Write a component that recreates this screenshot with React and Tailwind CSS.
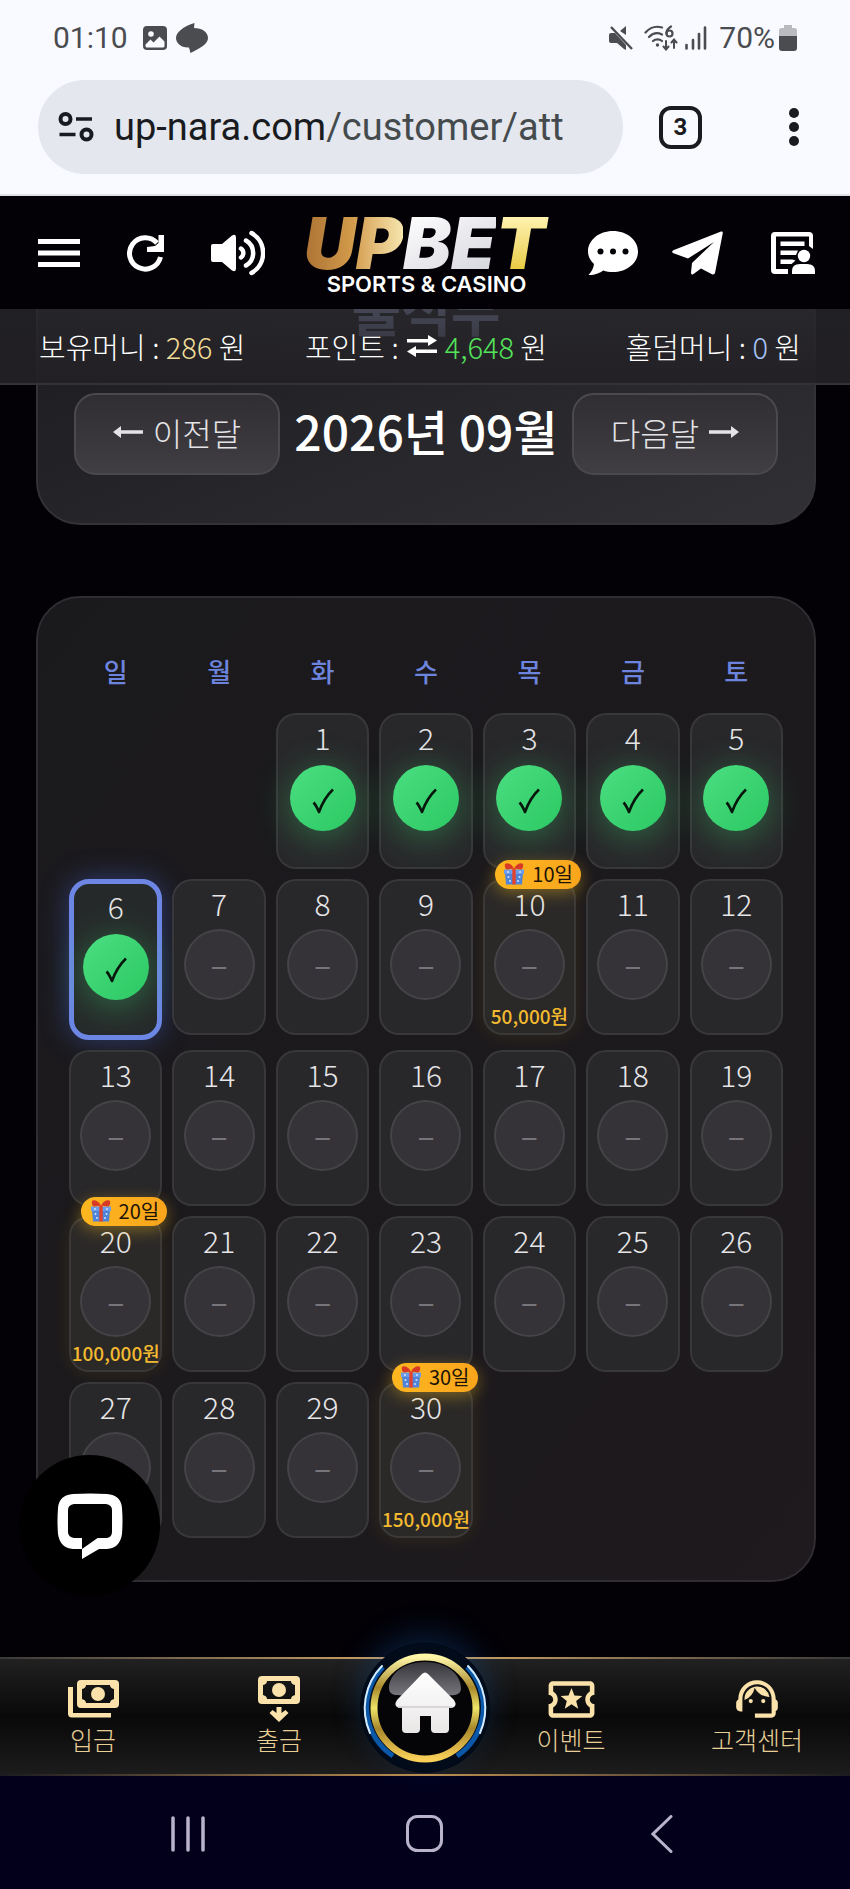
// App.jsx
import { MdSupportAgent, MdOutlineLocalActivity } from "react-icons/md";

const WEEKDAYS = ["일", "월", "화", "수", "목", "금", "토"];
const FIRST_WEEKDAY = 2;
const DAYS_IN_MONTH = 30;
const TODAY = 6;
const REWARDS = { 10: "50,000원", 20: "100,000원", 30: "150,000원" };

function StatusBar() {
  return (
    <div className="flex items-center justify-between px-[53px] pt-5 h-[56px] text-[30px] leading-9 text-[#4b4c50]">
      <div className="flex items-center">
        <span>01:10</span>
        <svg className="ml-[15px] w-6 h-6" viewBox="0 0 24 24">
          <rect width="24" height="24" rx="4" fill="currentColor" />
          <circle cx="8" cy="8" r="2.8" fill="#f8faff" />
          <path d="M2.500 18.500l5-5 3 3 6-6 5 5V20a1.500 1.500 0 0 1-1.500 1.500H4A1.500 1.500 0 0 1 2.500 20z" fill="#f8faff" />
        </svg>
        <svg className="ml-[9px] w-8 h-[30px]" viewBox="0 0 32 30">
          <path
            d="M18.500 0L18 5C26 5 32 9 32 15C32 21 24 25.500 14.500 30L13 24.500C5 25 0 20 0 15C0 9 8 3 18.500 0z"
            fill="currentColor"
          />
        </svg>
      </div>
      <div className="flex items-center">
        <svg className="w-6 h-6" viewBox="0 0 24 24" fill="currentColor">
          <path d="M0 9a2 2 0 0 1 2-2h4l11 12v5l-2-1-7-6H2a2 2 0 0 1-2-2zM11 5l6-5v9z" />
          <path d="M2 1l21 22" stroke="currentColor" strokeWidth="2.400" />
        </svg>
        <svg className="ml-[11px] w-[34px] h-[26px]" viewBox="0 0 34 26" fill="none" stroke="currentColor" strokeWidth="2.200" strokeLinecap="round">
          <path d="M1.500 7.500C6.500 2 13 1 18 2.500M5 12C9 8 14 7.500 18 9.500M9 16C11.500 13.800 15.500 13.800 18 16" />
          <circle cx="13.500" cy="20" r="1.700" fill="currentColor" stroke="none" />
          <path d="M27 1.500C23 4 22.300 6.500 22.500 8.500" />
          <circle cx="25.500" cy="8.500" r="3" />
          <path d="M22 16v8M19.500 21.500l2.500 3 2.500-3M30 23v-8M27.500 17.500l2.500-3 2.500 3" strokeWidth="2" />
        </svg>
        <svg className="ml-[7px] w-[22px] h-6" viewBox="0 0 22 24" stroke="currentColor" strokeWidth="2.600" strokeLinecap="round">
          <path d="M1.500 19v3.500M8 14v8.500M14 8v14.500M20 1.500v21" />
        </svg>
        <span className="ml-3">70%</span>
        <svg className="ml-1 w-[18px] h-[26px]" viewBox="0 0 18 26">
          <path d="M5 0h8v3h2.500A2.500 2.500 0 0 1 18 5.500V12H0V5.500A2.500 2.500 0 0 1 2.500 3H5z" fill="#b9bbbf" />
          <path d="M0 11h18v12a3 3 0 0 1-3 3H3a3 3 0 0 1-3-3z" fill="currentColor" />
        </svg>
      </div>
    </div>
  );
}

function AddressBar() {
  return (
    <div className="flex items-center pl-[38px] pr-11 pt-6 pb-5">
      <div className="flex items-center flex-1 min-w-0 h-[94px] pl-5 rounded-full bg-[#e4e7ee]">
        <svg className="w-9 h-[30px] shrink-0" viewBox="0 0 36 30" fill="none" stroke="#191b20" strokeWidth="4">
          <circle cx="7.500" cy="7" r="5" />
          <circle cx="28.500" cy="22.500" r="5" />
          <path d="M18 7h16M1.500 22.500h16" strokeWidth="3.600" />
        </svg>
        <a href="#address" className="ml-5 text-[38px] leading-[48px] text-[#191b20] whitespace-nowrap">
          up-nara.com<span className="text-[#454b4d]">/customer/att</span>
        </a>
      </div>
      <button
        aria-label="열린 탭"
        className="ml-9 w-[43px] h-[43px] rounded-xl border-4 border-[#191b20] text-2xl leading-none font-bold text-[#191b20]"
      >
        3
      </button>
      <button aria-label="메뉴 더보기" className="ml-20 w-6 h-[38px] flex flex-col items-center justify-between">
        <span className="w-[10px] h-[10px] rounded-full bg-[#191b20]" />
        <span className="w-[10px] h-[10px] rounded-full bg-[#191b20]" />
        <span className="w-[10px] h-[10px] rounded-full bg-[#191b20]" />
      </button>
    </div>
  );
}

function SiteHeader() {
  return (
    <header className="relative z-20 bg-[#030106]">
      <div className="flex items-center justify-between h-[113px] pl-[38px] pr-[35px] text-white">
        <div className="flex items-center gap-[47px]">
          <button aria-label="메뉴">
            <svg className="w-[42px] h-7" viewBox="0 0 42 28" fill="currentColor">
              <path d="M0 0h42v5H0zM0 11.500h42v5H0zM0 23h42v5H0z" />
            </svg>
          </button>
          <button aria-label="새로고침">
            <svg className="w-[37px] h-[38px]" viewBox="0 0 37 38">
              <path d="M33.500 23A15.700 15.700 0 1 1 30 9" fill="none" stroke="currentColor" strokeWidth="5" />
              <path d="M31.500 1H37v17H20v-5l8-1 3.500-3z" fill="currentColor" />
            </svg>
          </button>
          <button aria-label="소리">
            <svg className="w-[54px] h-[46px]" viewBox="0 0 54 46" fill="none" stroke="currentColor" strokeWidth="4.500" strokeLinecap="round">
              <path d="M2 14h9L21 5.500q4-2 4 2v31q0 4-4 2L11 32H2q-2 0-2-2V16q0-2 2-2z" fill="currentColor" stroke="none" />
              <path d="M30 18.500a5.500 5.500 0 0 1 0 9M35 10.500a14.500 14.500 0 0 1 0 25M40.500 3a23 23 0 0 1 0 40" />
            </svg>
          </button>
        </div>

        <a href="#home" className="flex flex-col items-center pt-1.5 font-[Inter]">
          <span className="flex text-[72px] leading-[54px] font-black italic">
            <span className="pl-1 text-transparent bg-clip-text bg-linear-to-r from-[#a86f33] via-[#d29a4a] to-[#f6e6ae]">UP</span>
            <span className="text-transparent bg-clip-text bg-linear-to-br from-white to-[#d5d5dd]">BE</span>
            <span className="pr-2 text-transparent bg-clip-text bg-linear-to-b from-[#fff3b0] to-[#e8cb3e]">T</span>
          </span>
          <span className="mt-0.5 text-[22px] leading-6 font-semibold">SPORTS &amp; CASINO</span>
        </a>

        <div className="flex items-center gap-[34px]">
          <button aria-label="채팅">
            <svg className="w-[50px] h-11" viewBox="0 0 50 44">
              <path d="M25 0C39 0 50 9 50 20.500S39 41 25 41c-3.500 0-6.800-.5-9.700-1.500C11 42.500 5 44.500.5 44 3.500 41 5.500 37 6 33 2.200 29.600 0 25.300 0 20.500 0 9 11 0 25 0z" fill="currentColor" />
              <g fill="#030106">
                <circle cx="12.500" cy="20.500" r="3" />
                <circle cx="25" cy="20.500" r="3" />
                <circle cx="37.500" cy="20.500" r="3" />
              </g>
            </svg>
          </button>
          <button aria-label="텔레그램">
            <svg className="w-[51px] h-[44px]" viewBox="0 0 51 44">
              <path d="M49 .5q2-.5 1.800 1.500L43 42q-.7 2-3 1.300L29 37.500l-7.500 5.500q-2.500 1.500-2.500-1.500l1-9.500L42 11 16 27.500.8 22q-1.500-1.500.5-2.800z" fill="currentColor" />
            </svg>
          </button>
          <button aria-label="내 정보" className="pl-3.5">
            <svg className="w-11 h-[42px]" viewBox="0 0 44 42" fill="currentColor">
              <path d="M4 0h34q4 0 4 4v13l-4-3V4.500H5V37h12v5H4q-4 0-4-4V4q0-4 4-4z" />
              <path d="M9.500 9.500h24v4.500h-24zM9.500 18.500H27l-2 4.500H9.500zM9.500 27.500h12l3 1-4 3.500h-11z" />
              <circle cx="33" cy="24" r="6.200" />
              <path d="M21 42v-3q0-7 8-7h7q8 0 8 7v3z" />
            </svg>
          </button>
        </div>
      </div>

      {/* balances float over the scrolled page */}
      <div className="absolute top-full inset-x-0 grid grid-cols-[1fr_auto_1fr] items-center h-[76px] pl-[39px] pr-[49px] border-b-2 border-[#343236] bg-linear-to-b from-[#28272b]/80 to-[#222024]/95 text-[29px] leading-8 font-light text-white whitespace-nowrap">
        <span>보유머니 : <span className="text-[#f0dd98]">286</span> 원</span>
        <span className="flex items-center pl-3">
          포인트 :
          <svg className="mx-2 w-[30px] h-[22px]" viewBox="0 0 30 22" fill="currentColor">
            <path d="M0 4h21V0l9 5.500-9 5.500V7.500H0zM30 18H9v4L0 16.500 9 11v3.500h21z" />
          </svg>
          <span><span className="text-[#53e35b]">4,648</span> 원</span>
        </span>
        <span className="justify-self-end">홀덤머니 : <span className="text-[#a5c3f5]">0</span> 원</span>
      </div>
    </header>
  );
}

function Arrow({ flip }) {
  return (
    <svg className={flip ? "w-[30px] h-3 rotate-180" : "w-[30px] h-3"} viewBox="0 0 30 12" fill="currentColor">
      <path d="M0 6l8-6v4.300h22v3.400H8V12z" />
    </svg>
  );
}

function MonthPanel() {
  const buttonClass =
    "flex items-center justify-center gap-2.5 w-[206px] h-[82px] pb-1 rounded-[22px] border-2 border-[#4b494e] bg-linear-to-b from-[#302e33] to-[#403e43] text-[32px] leading-9 font-light text-[#e4e3e6]";
  return (
    <section className="rounded-[44px] border-2 border-[#343236] bg-linear-to-br from-[#19181b] to-[#313035] px-9 pb-12">
      <h1 className="pt-[62px] text-center text-[54px] leading-[72px] font-bold text-[#b4c4fa]">출석부</h1>
      <div className="flex items-center justify-between mt-12">
        <button className={buttonClass}>
          <Arrow />
          이전달
        </button>
        <h2 className="pb-2 text-5xl font-medium text-white whitespace-nowrap">2026년 09월</h2>
        <button className={buttonClass}>
          다음달
          <Arrow flip />
        </button>
      </div>
    </section>
  );
}

function GiftIcon() {
  return (
    <svg className="w-[22px] h-[22px]" viewBox="0 0 22 22">
      <path d="M2 10h18l-1 11.500H3z" fill="#4f84d8" />
      <path d="M1 6.500h20V11H1z" fill="#6b9cec" />
      <g fill="#cfe2ff">
        <circle cx="5" cy="9" r="1" />
        <circle cx="17" cy="9" r="1" />
        <circle cx="5.500" cy="14" r="1" />
        <circle cx="16.500" cy="14" r="1" />
        <circle cx="7" cy="18" r="1" />
        <circle cx="15" cy="18" r="1" />
      </g>
      <path d="M9.300 5.500h3.400v16H9.300z" fill="#e2432f" />
      <path d="M11 5.500C8 0 3.500-.5 2 1c-.5 2 0 4 1.500 5.500zM11 5.500C14 0 18.500-.5 20 1c.5 2 0 4-1.500 5.500z" fill="#d93a25" />
    </svg>
  );
}

function DayCell({ day }) {
  const checked = day <= TODAY;
  const reward = REWARDS[day];
  const isToday = day === TODAY;

  let frame = "min-h-[156px] border-2 border-white/8 bg-[#28272a]";
  if (isToday) frame = "min-h-[161px] border-[5px] border-[#6d86e4] bg-[#26292a] shadow-[0_0_28px_rgba(80,115,235,0.4)]";
  if (reward) frame = "min-h-[156px] border-2 border-white/8 bg-[#2b2928] shadow-[0_0_20px_rgba(250,200,30,0.1)]";

  return (
    <li className={`relative flex flex-col items-center pt-1.5 rounded-[20px] ${frame}`}>
      <span className="text-[30px] leading-8 font-light text-[#e6e5e8]">{day}</span>
      {checked ? (
        <span className="flex items-center justify-center mt-3 w-[66px] h-[66px] rounded-full bg-linear-to-br from-[#4ade80] to-[#2bc864] shadow-[0_6px_36px_rgba(60,215,115,0.4)]">
          <svg className="mt-1.5 w-[22px] h-[26px]" viewBox="0 0 22 26" fill="none" stroke="#07170c" strokeWidth="2.600" strokeLinejoin="round" role="img" aria-label="출석">
            <path d="M1.500 14.500Q4 17 7 24Q12 10 21 1.500" />
          </svg>
        </span>
      ) : (
        <span className="flex items-center justify-center mt-2.5 w-[71px] h-[71px] pb-1 rounded-full border-2 border-white/8 bg-[#353337] text-[32px] leading-8 text-[#77757a]">
          –
        </span>
      )}
      {reward && <span className="mt-1 text-[19px] leading-6 font-medium text-[#f3ba2f] whitespace-nowrap">{reward}</span>}
      {reward && (
        <span className="absolute -top-[21px] -right-[7px] z-10 flex items-center justify-center gap-[7px] w-[86px] h-[29px] pb-px rounded-full bg-linear-to-r from-[#fdb620] to-[#f9a51c] text-xl leading-7 text-[#1c1406] whitespace-nowrap shadow-[0_4px_16px_rgba(250,190,30,0.4)]">
          <GiftIcon />
          {day}일
        </span>
      )}
    </li>
  );
}

function Calendar() {
  const days = Array.from({ length: DAYS_IN_MONTH }, (_, i) => i + 1);
  return (
    <section className="mt-[71px] rounded-[44px] border-2 border-[#2f2d31] bg-linear-to-br from-[#1a191c] to-[#1e1a1e] px-[31px] pt-[53px] pb-[42px]">
      <div className="grid grid-cols-7 gap-[10px] text-center text-[26px] leading-10 font-medium text-[#6d84de]">
        {WEEKDAYS.map((name) => (
          <span key={name}>{name}</span>
        ))}
      </div>
      <ol className="grid grid-cols-7 gap-[10px] items-start mt-[22px]">
        <li className="h-px" style={{ gridColumn: `span ${FIRST_WEEKDAY}` }} aria-hidden="true" />
        {days.map((day) => (
          <DayCell key={day} day={day} />
        ))}
      </ol>
    </section>
  );
}

function NavItem({ label, children }) {
  return (
    <a href="#menu" className="flex-1 flex flex-col items-center pt-4 text-[#fbe2ab]">
      <span className="flex items-center justify-center h-12">{children}</span>
      <span className="text-[25px] leading-8 font-light text-[#e8cf96]">{label}</span>
    </a>
  );
}

function HomeButton() {
  return (
    <a href="#home" aria-label="홈" className="relative w-[106px]">
      <svg className="absolute -top-4 left-1/2 -translate-x-1/2 w-[130px] h-[130px] max-w-none rounded-full shadow-[0_-10px_30px_rgba(20,90,170,0.3)]" viewBox="0 0 130 130">
        <defs>
          <linearGradient id="ring" x1="0" y1="0" x2="0" y2="1">
            <stop offset="0" stopColor="#fff7a8" />
            <stop offset="0.300" stopColor="#a8882c" />
            <stop offset="0.500" stopColor="#f0e468" />
            <stop offset="0.700" stopColor="#a8882c" />
            <stop offset="1" stopColor="#f9cf58" />
          </linearGradient>
          <linearGradient id="gloss" x1="0" y1="0" x2="0" y2="1">
            <stop offset="0" stopColor="#37363b" />
            <stop offset="1" stopColor="#77767c" />
          </linearGradient>
          <linearGradient id="house" x1="0" y1="0" x2="0" y2="1">
            <stop offset="0" stopColor="#ffffff" />
            <stop offset="1" stopColor="#e9e6e6" />
          </linearGradient>
        </defs>
        <circle cx="65" cy="65" r="65" fill="#020b19" />
        <path d="M23 24A58 58 0 0 0 33 113M107 24A58 58 0 0 1 97 113" fill="none" stroke="#0b57a8" strokeWidth="5" />
        <path d="M22 23A60.500 60.500 0 0 0 10 90M108 23A60.500 60.500 0 0 1 120 90" fill="none" stroke="#d3ecff" strokeWidth="2" strokeLinecap="round" />
        <circle cx="65" cy="65" r="51" fill="#050507" stroke="url(#ring)" strokeWidth="7" />
        <path d="M65 19C86 19 101 31 101 45C101 55 90 52 65 52S29 55 29 45C29 31 44 19 65 19z" fill="url(#gloss)" />
        <path
          d="M62 31q3-3 6 0l26 26q4 6-2 8h-3v21q0 4-4 4H75q-4 0-4-4V73H60v13q0 4-4 4H46q-4 0-4-4V65h-3q-6-2-2-8z"
          fill="url(#house)"
        />
        <path d="M38 64h54" stroke="#cfcccc" strokeWidth="1.500" />
      </svg>
    </a>
  );
}

function BottomNav() {
  return (
    <nav className="relative z-10 bg-[#141415]">
      <div className="h-[2px] bg-linear-to-r from-[#3a3938] via-[#e0b06a] to-[#3a3938]" />
      <div className="flex h-[115px] bg-linear-to-b from-[#212121] via-[#0a0909] to-[#1c1c1d]">
        <NavItem label="입금">
          <svg className="w-[51px] h-[38px]" viewBox="0 0 51 38" fill="currentColor">
            <path d="M0 7h5v26h38v4.500H4q-4 0-4-4z" />
            <path
              fillRule="evenodd"
              d="M13 0h34q4 0 4 4v20q0 4-4 4H13q-4 0-4-4V4q0-4 4-4zM18 5q0 3-4 4v10q4 1 4 4h24q0-3 4-4V9q-4-1-4-4z"
            />
            <circle cx="30" cy="14" r="7" />
          </svg>
        </NavItem>
        <NavItem label="출금">
          <svg className="w-[42px] h-[46px]" viewBox="0 0 42 46" fill="currentColor">
            <path
              fillRule="evenodd"
              d="M4 0h34q4 0 4 4v20q0 4-4 4H4q-4 0-4-4V4q0-4 4-4zM9 5q0 3-4 4v10q4 1 4 4h24q0-3 4-4V9q-4-1-4-4z"
            />
            <circle cx="21" cy="14" r="7" />
            <path d="M18.500 31h5v6l4-3 3 3-9.500 9-9.500-9 3-3 4 3z" />
          </svg>
        </NavItem>
        <HomeButton />
        <NavItem label="이벤트">
          <MdOutlineLocalActivity className="w-[55px] h-[55px]" />
        </NavItem>
        <NavItem label="고객센터">
          <MdSupportAgent className="w-[50px] h-[50px]" />
        </NavItem>
      </div>
      <div className="h-[2px] bg-linear-to-r from-[#1c1b20] via-[#c4934f] to-[#1c1b20]" />
    </nav>
  );
}

function SystemNav() {
  return (
    <div className="grid grid-cols-3 justify-items-center items-center h-[115px] px-[69px] bg-[#03001c] text-[#b9b4cc]">
      <button aria-label="최근 앱">
        <svg className="w-9 h-9" viewBox="0 0 36 36" stroke="currentColor" strokeWidth="3.500" strokeLinecap="round">
          <path d="M3 2v32M18 2v32M33 2v32" />
        </svg>
      </button>
      <button aria-label="홈 화면">
        <svg className="w-[37px] h-[37px]" viewBox="0 0 37 37" fill="none" stroke="currentColor" strokeWidth="3">
          <rect x="1.500" y="1.500" width="34" height="34" rx="10" />
        </svg>
      </button>
      <button aria-label="뒤로">
        <svg className="w-[22px] h-[38px]" viewBox="0 0 22 38" fill="none" stroke="currentColor" strokeWidth="3" strokeLinecap="round">
          <path d="M20 1.500L2 19l18 17.500" />
        </svg>
      </button>
    </div>
  );
}

export default function App() {
  return (
    <div className="flex flex-col min-h-screen bg-[#030106] font-['Noto_Sans_CJK_KR',sans-serif]">
      <div className="relative z-30 bg-[#f8faff] border-b-2 border-[#dfe1e6] font-[Roboto]">
        <StatusBar />
        <AddressBar />
      </div>
      <SiteHeader />
      <main className="relative flex-1 pl-9 pr-[34px] -mt-[100px] pb-[75px]">
        <MonthPanel />
        <Calendar />
        <button
          aria-label="상담 채팅"
          className="absolute left-[19px] bottom-[61px] z-10 flex items-center justify-center w-[141px] h-[141px] rounded-full bg-black text-white"
        >
          <svg className="w-[66px] h-[66px]" viewBox="0 0 66 66">
            <path
              fillRule="evenodd"
              d="M16 1Q33 0 50 1Q64 2 65 15Q66 28 65 41Q63 55 50 56H42L25 66V45H50Q55 44 55 39V17Q55 12 49 11H17Q11 12 11 17V39Q11 44 17 45H25V56H16Q3 55 1 41Q0 28 1 15Q2 2 16 1z"
              fill="currentColor"
            />
            <path d="M25 44h17l-17 12z" fill="#000" />
          </svg>
        </button>
      </main>
      <BottomNav />
      <SystemNav />
    </div>
  );
}
